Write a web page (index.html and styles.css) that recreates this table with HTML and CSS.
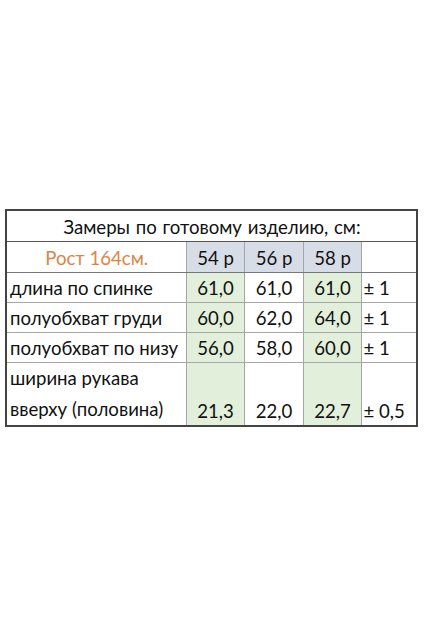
FILE: index.html
```html
<!DOCTYPE html>
<html lang="ru">
<head>
<meta charset="utf-8">
<link rel="stylesheet" href="styles.css">
</head>
<body>
<table class="sizes">
  <colgroup>
    <col class="c-label"><col class="c-num"><col class="c-num2"><col class="c-num"><col class="c-tol">
  </colgroup>
  <tr class="r-title"><td colspan="5" class="title">Замеры по готовому изделию, см:</td></tr>
  <tr class="r-head">
    <td class="height">Рост 164см.</td>
    <td class="hd">54 р</td><td class="hd">56 р</td><td class="hd">58 р</td><td class="tol"></td>
  </tr>
  <tr class="r-row">
    <td class="label">длина по спинке</td>
    <td class="num green">61,0</td><td class="num">61,0</td><td class="num green">61,0</td><td class="tol">± 1</td>
  </tr>
  <tr class="r-row">
    <td class="label">полуобхват груди</td>
    <td class="num green">60,0</td><td class="num">62,0</td><td class="num green">64,0</td><td class="tol">± 1</td>
  </tr>
  <tr class="r-row">
    <td class="label">полуобхват по низу</td>
    <td class="num green">56,0</td><td class="num">58,0</td><td class="num green">60,0</td><td class="tol">± 1</td>
  </tr>
  <tr class="r-last">
    <td class="label two">ширина рукава<br>вверху (половина)</td>
    <td class="num green">21,3</td><td class="num">22,0</td><td class="num green">22,7</td><td class="tol">± 0,5</td>
  </tr>
</table>
</body>
</html>
```
FILE: styles.css
```css
html, body {
  margin: 0;
  padding: 0;
  background: #ffffff;
}
body {
  width: 424px;
  height: 636px;
  padding-top: 209px;
  padding-left: 5px;
  box-sizing: border-box;
  font-family: Lato, "Open Sans", sans-serif;
  color: #111;
}
.sizes {
  border-collapse: collapse;
  table-layout: fixed;
  width: 411px;
  font-size: 18.6px;
  border: 2px solid #444;
}
.c-label { width: 180px; }
.c-num { width: 58px; }
.c-num2 { width: 59px; }
.c-tol { width: 56px; }
td {
  border: 1px solid #a6a6a6;
  padding: 0 2px 3px 3px;
  vertical-align: bottom;
  line-height: 22px;
  white-space: nowrap;
}
.r-title td { height: 27px; border-bottom: 1px solid #555; }
.r-head td { height: 27px; border-bottom: 1px solid #777; }
.r-row td { height: 26px; }
.r-last td { height: 58px; border-top: 1px solid #333; }
.title { text-align: center; word-spacing: 1px; }
.height { text-align: center; color: #dc8446; }
.hd { text-align: center; background: #d7dde6; }
.num { text-align: center; }
.green { background: #e2efda; }
.tol { text-align: left; padding-left: 2px; }
.two { line-height: 31px; padding-bottom: 0; }
```
